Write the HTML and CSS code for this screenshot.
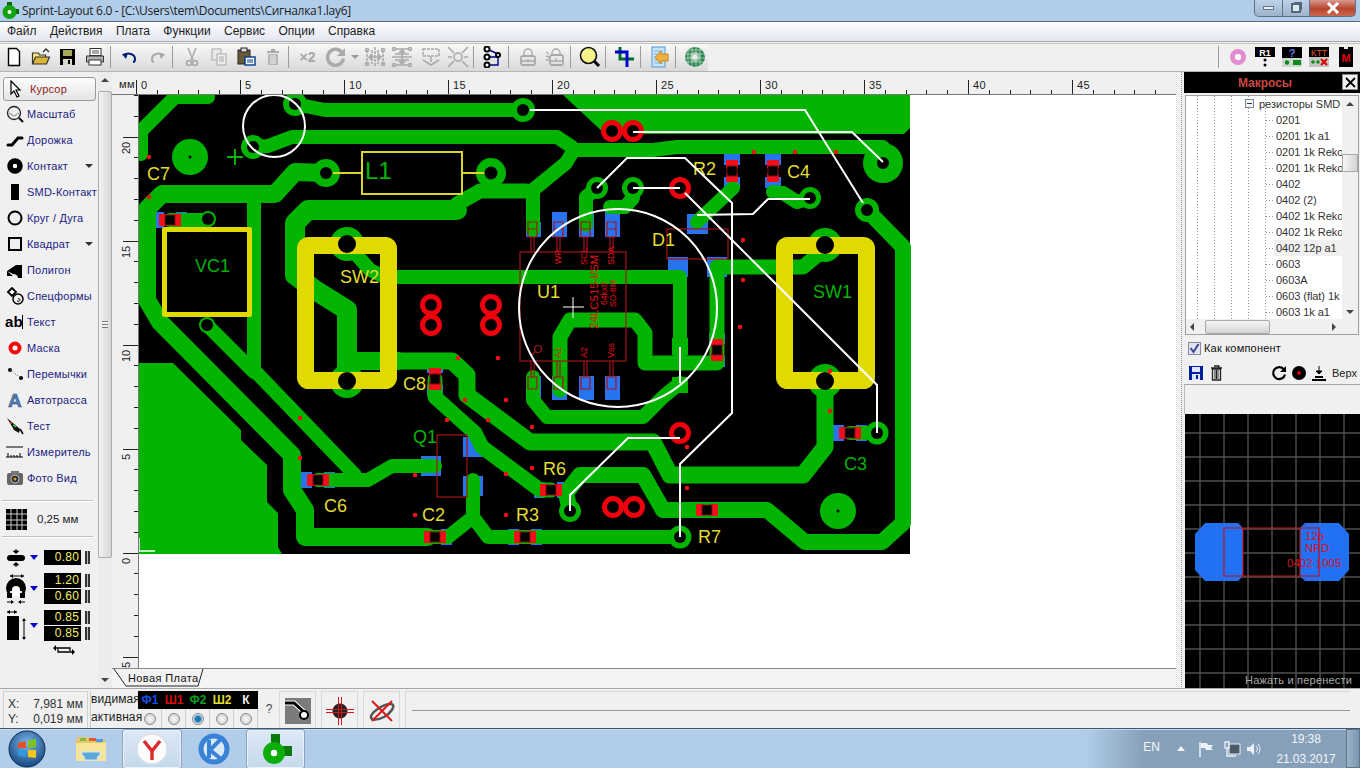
FILE: index.html
```html
<!DOCTYPE html>
<html lang="ru">
<head>
<meta charset="utf-8">
<title>Sprint-Layout 6.0</title>
<link rel="stylesheet" href="styles.css">
</head>
<body>
<div class="title">
  <svg class="ti" width="20" height="20" viewBox="0 0 20 20"><rect x="6" y="1" width="5" height="6" fill="#0a6b0a"/><rect x="13" y="8" width="5" height="5" fill="#0a6b0a"/><circle cx="8.5" cy="11" r="7" fill="#12a312"/><circle cx="8.5" cy="11" r="2" fill="#fff"/></svg>
  <span class="title-text">Sprint-Layout 6.0 - [C:\Users\tem\Documents\Сигналка1.lay6]</span>
  <div class="winctl">
    <div class="wb wb-min"><span class="w-min"></span></div>
    <div class="wb wb-max"><span class="w-max"></span></div>
    <div class="wb wb-close"><svg width="14" height="12" viewBox="0 0 14 12"><path d="M2 1l10 10M12 1L2 11" stroke="#fff" stroke-width="3"/></svg></div>
  </div>
</div>
<div class="menu"><span>Файл</span><span>Действия</span><span>Плата</span><span>Функции</span><span>Сервис</span><span>Опции</span><span>Справка</span></div>
<div class="toolbar">
  <div class="tb-left">
    <div class="tb"><svg width="20" height="20" viewBox="0 0 20 20"><path d="M4.5 1.5h8l3 3v14h-11z" fill="#fff" stroke="#000" stroke-width="1.4"/></svg></div>
    <div class="tb"><svg width="20" height="20" viewBox="0 0 20 20"><path d="M1.5 17V6h6l1 2h6v2" fill="#ffe680" stroke="#333" stroke-width="1.2"/><path d="M1.5 17l3-7h14l-3 7z" fill="#d9b53a" stroke="#333" stroke-width="1.2"/><path d="M12 5l3-3 3 3" fill="none" stroke="#333" stroke-width="1.4"/></svg></div>
    <div class="tb"><svg width="20" height="20" viewBox="0 0 20 20"><rect x="2" y="2" width="15" height="16" fill="#000"/><rect x="5" y="3" width="9" height="6" fill="#a8a85a"/><rect x="5" y="12" width="9" height="6" fill="#d8d8c8"/><rect x="10" y="13" width="2" height="4"/></svg></div>
    <div class="tb"><svg width="20" height="20" viewBox="0 0 20 20"><rect x="5" y="1.5" width="11" height="7" fill="#fff" stroke="#333"/><path d="M1.5 9h17v6h-17z" fill="#b5b5b5" stroke="#333"/><rect x="4" y="13" width="12" height="5" fill="#fff" stroke="#333"/><path d="M7 4h7M7 6h7" stroke="#555"/></svg></div>
    <i class="sep"></i>
    <div class="tb"><svg width="20" height="20" viewBox="0 0 20 20"><path d="M3 8h1c4-3 11-1 11 4 0 2-1 3-2 3" fill="none" stroke="#00207a" stroke-width="2"/><path d="M2 7l6-1-2 6z" fill="#00207a"/></svg></div>
    <div class="tb"><svg width="20" height="20" viewBox="0 0 20 20"><path d="M17 8h-1C12 5 5 7 5 12c0 2 1 3 2 3" fill="none" stroke="#a9a9a9" stroke-width="2"/><path d="M18 7l-6-1 2 6z" fill="#a9a9a9"/></svg></div>
    <i class="sep"></i>
    <div class="tb"><svg width="20" height="20" viewBox="0 0 20 20"><path d="M6 1l5 12M14 1L9 13" stroke="#aaa" stroke-width="1.5"/><circle cx="7" cy="16" r="2.5" fill="none" stroke="#aaa" stroke-width="1.6"/><circle cx="13" cy="16" r="2.5" fill="none" stroke="#aaa" stroke-width="1.6"/></svg></div>
    <div class="tb"><svg width="20" height="20" viewBox="0 0 20 20"><rect x="3" y="2" width="9" height="11" fill="#e8e8e8" stroke="#aaa"/><rect x="8" y="7" width="9" height="11" fill="#eee" stroke="#aaa"/><path d="M10 10h5M10 12h5M10 14h5" stroke="#aaa"/></svg></div>
    <div class="tb"><svg width="20" height="20" viewBox="0 0 20 20"><rect x="2" y="3" width="12" height="14" fill="#6b5a3a" stroke="#222"/><rect x="5" y="1" width="6" height="4" fill="#ddd" stroke="#222"/><rect x="9" y="10" width="10" height="8" fill="#fff" stroke="#003a8c" stroke-width="1.4"/><path d="M11 13h6M11 15h6" stroke="#003a8c"/></svg></div>
    <div class="tb"><svg width="20" height="20" viewBox="0 0 20 20"><rect x="4" y="4" width="12" height="2" fill="#aaa"/><rect x="8" y="2" width="4" height="2" fill="#aaa"/><rect x="5" y="7" width="10" height="11" fill="#b5b5b5"/><path d="M8 8v9M10 8v9M12 8v9" stroke="#eee"/></svg></div>
    <i class="sep"></i>
    <div class="tb tb-x2">×2</div>
    <div class="tb tb-rot"><svg width="22" height="22" viewBox="0 0 22 22"><path d="M17 6.5a8 8 0 1 0 1.5 6" fill="none" stroke="#aaa" stroke-width="3.4"/><path d="M20 2v8h-8z" fill="#aaa"/></svg></div>
    <div class="tb-drop"></div>
    <div class="tb"><svg width="22" height="22" viewBox="0 0 22 22" fill="none" stroke="#aaa" stroke-width="1.6"><path d="M11 1v20M3 4v14M8 4v14M14 4v14M19 4v14" stroke-dasharray="3 1"/><path d="M5 11h12M5 11l2-2v4zM17 11l-2-2v4z"/><circle cx="3" cy="4" r="1.500"/><circle cx="19" cy="4" r="1.500"/><circle cx="3" cy="18" r="1.500"/><circle cx="19" cy="18" r="1.500"/></svg></div>
    <div class="tb"><svg width="22" height="22" viewBox="0 0 22 22" fill="none" stroke="#aaa" stroke-width="1.6"><path d="M1 11h20M4 3h14M4 8h14M4 14h14M4 19h14"/><path d="M11 4v14M11 4l-2 2h4zM11 18l-2-2h4z"/><circle cx="3" cy="3" r="1.500"/><circle cx="19" cy="3" r="1.500"/><circle cx="3" cy="19" r="1.500"/><circle cx="19" cy="19" r="1.500"/></svg></div>
    <div class="tb tb-gap"><svg width="22" height="22" viewBox="0 0 22 22" fill="none" stroke="#aaa" stroke-width="1.5"><rect x="3" y="3" width="16" height="7" stroke-dasharray="3 1"/><path d="M3 14l8 5 8-5M11 10v6"/></svg></div>
    <div class="tb"><svg width="22" height="22" viewBox="0 0 22 22" fill="none" stroke="#aaa" stroke-width="1.6"><circle cx="11" cy="11" r="4"/><path d="M1 1l6 6M21 1l-6 6M1 21l6-6M21 21l-6-6M1 11h4M17 11h4"/></svg></div>
    <i class="sep"></i>
    <div class="tb"><svg width="20" height="22" viewBox="0 0 20 22"><path d="M4 3l11 5M4 11h11M4 19h11v-8" fill="none" stroke="#00008c" stroke-width="1.4"/><circle cx="4" cy="3" r="2.5" fill="#fff" stroke="#000" stroke-width="2"/><circle cx="4" cy="11" r="2.5" fill="#fff" stroke="#000" stroke-width="2"/><circle cx="4" cy="19" r="2.5" fill="#fff" stroke="#000" stroke-width="2"/><circle cx="15" cy="9" r="2" fill="#fff" stroke="#000" stroke-width="2"/></svg></div>
    <i class="sep"></i>
    <div class="tb"><svg width="20" height="20" viewBox="0 0 20 20" fill="none" stroke="#aaa" stroke-width="1.4"><path d="M6 9V6a4 4 0 0 1 8 0v3"/><rect x="3" y="9" width="14" height="9" rx="2" stroke-width="1.8"/><path d="M10 12v3M4 14h12"/></svg></div>
    <div class="tb"><svg width="20" height="20" viewBox="0 0 20 20" fill="none" stroke="#aaa" stroke-width="1.4"><path d="M7 8V6a4 4 0 0 1 8 0v2"/><rect x="5" y="8" width="13" height="10" rx="2" stroke-width="1.8"/><path d="M11 11v3M6 14h11M1 5l3 2M1 9l3 1M1 13l3 0"/></svg></div>
    <i class="sep"></i>
    <div class="tb"><svg width="22" height="22" viewBox="0 0 22 22"><path d="M15 15l5 5" stroke="#000" stroke-width="3"/><circle cx="9.5" cy="9.5" r="8" fill="#f6f28a" stroke="#111" stroke-width="1.6"/></svg></div>
    <i class="sep"></i>
    <div class="tb"><svg width="22" height="22" viewBox="0 0 22 22"><path d="M6 1v12h14" fill="none" stroke="#006e2a" stroke-width="3"/><path d="M1 6h12v15" fill="none" stroke="#0000d0" stroke-width="3"/></svg></div>
    <i class="sep"></i>
    <div class="tb"><svg width="20" height="22" viewBox="0 0 20 22"><rect x="2" y="1" width="13" height="20" fill="#c8e4fa" stroke="#4f9ad8"/><path d="M4 5h9M4 8h9M4 11h9M4 14h9M4 17h9" stroke="#78b3e2"/><path d="M18 8v7h-7v3l-6-6.500 6-6.500v3z" fill="#ecb13e" stroke="#c4871b"/></svg></div>
    <i class="sep"></i>
    <div class="tb"><svg width="22" height="22" viewBox="0 0 22 22"><circle cx="11" cy="11" r="10" fill="#2f8a52"/><circle cx="11" cy="11" r="5" fill="#8dbf9f"/><circle cx="11" cy="11" r="2.500" fill="#eee"/><path d="M0 4h22M0 8h22M0 12h22M0 16h22M4 0v22M8 0v22M12 0v22M16 0v22" stroke="#e8e8e8" stroke-width=".6"/></svg></div>
  </div>
  <div class="tb-right">
    <i class="sep"></i>
    <div class="tb"><svg width="20" height="20" viewBox="0 0 20 20"><circle cx="10" cy="10" r="5.500" fill="none" stroke="#e48ccf" stroke-width="5"/><circle cx="10" cy="10" r="3" fill="#fff"/></svg></div>
    <div class="tb"><svg width="20" height="20" viewBox="0 0 20 20"><rect width="20" height="10"/><text x="10" y="8.500" class="ic-txt">R1</text><circle cx="10" cy="13" r="1.500"/><circle cx="10" cy="18" r="1.500"/></svg></div>
    <div class="tb"><svg width="20" height="20" viewBox="0 0 20 20"><rect width="20" height="20" fill="#000"/><rect y="11" width="20" height="9" fill="#cfd8cf"/><text x="10" y="9.500" class="ic-q">?</text><circle cx="5" cy="15.500" r="2.200" fill="#0b8a1e"/><rect x="11" y="13" width="8" height="5" fill="#0b8a1e"/></svg></div>
    <div class="tb"><svg width="20" height="20" viewBox="0 0 20 20"><rect width="20" height="10" fill="#000"/><rect y="10" width="20" height="10" fill="#c5c5c5"/><text x="10" y="9" class="ic-ktt">KTT</text><circle cx="4" cy="15" r="1.800" fill="#0a8f1a"/><circle cx="9" cy="15" r="1.800" fill="#0a8f1a"/><path d="M12 12l6 6M18 12l-6 6" stroke="#d80000" stroke-width="2"/></svg></div>
    <div class="tb"><svg width="14" height="20" viewBox="0 0 14 20"><rect width="14" height="20"/><rect x="5" y="0" width="4" height="2" fill="#eee"/><text x="7" y="15" class="ic-m">M</text></svg></div>
  </div>
</div>
<div class="main">
  <div class="left">
    <div class="tool tool-on"><svg width="18" height="18" viewBox="0 0 18 18"><path d="M4 1v13l3-3 3 6 2-1-3-6h4z" fill="#fff" stroke="#000" stroke-width="1.200"/></svg><span class="sel">Курсор</span></div>
    <div class="tool"><svg width="18" height="18" viewBox="0 0 18 18"><circle cx="8" cy="8" r="6.500" fill="#eee" stroke="#222" stroke-width="1.300"/><path d="M3 8l5 3 5-3" fill="none" stroke="#888"/><path d="M13 13l4 4" stroke="#000" stroke-width="2"/></svg><span>Масштаб</span></div>
    <div class="tool"><svg width="18" height="18" viewBox="0 0 18 18"><path d="M2 14h4l6-7h4" fill="none" stroke="#000" stroke-width="3" stroke-linecap="round"/></svg><span>Дорожка</span></div>
    <div class="tool"><svg width="18" height="18" viewBox="0 0 18 18"><circle cx="9" cy="9" r="5" fill="#fff" stroke="#000" stroke-width="5.500"/></svg><span>Контакт</span><b class="drop"></b></div>
    <div class="tool"><svg width="18" height="18" viewBox="0 0 18 18"><rect x="5" y="1" width="8" height="16"/></svg><span>SMD-Контакт</span></div>
    <div class="tool"><svg width="18" height="18" viewBox="0 0 18 18"><circle cx="9" cy="9" r="6.500" fill="none" stroke="#000" stroke-width="2"/></svg><span>Круг / Дуга</span></div>
    <div class="tool"><svg width="18" height="18" viewBox="0 0 18 18"><rect x="3" y="3" width="12" height="12" fill="none" stroke="#000" stroke-width="2"/></svg><span>Квадрат</span><b class="drop"></b></div>
    <div class="tool"><svg width="18" height="18" viewBox="0 0 18 18"><path d="M1 10l9-6h6v13h-4c0-3-3-4-5-4z M1 10v5h6z"/></svg><span>Полигон</span></div>
    <div class="tool"><svg width="18" height="18" viewBox="0 0 18 18"><path d="M2 5l4-4 4 4-4 4z" fill="#fff" stroke="#000" stroke-width="1.800"/><circle cx="12" cy="12" r="5" fill="none" stroke="#000" stroke-width="1.500"/><path d="M12 12c1-1 2 0 2 1s-2 2-3 1" fill="none" stroke="#000"/></svg><span>Спецформы</span></div>
    <div class="tool"><svg class="ov" width="18" height="18" viewBox="0 0 18 18"><text x="-1" y="14" class="ic-ab">ab</text><path d="M16.500 2v14" stroke="#000"/></svg><span class="t-close">Текст</span></div>
    <div class="tool"><svg width="18" height="18" viewBox="0 0 18 18"><circle cx="9" cy="9" r="4.500" fill="#fff" stroke="#f00c0c" stroke-width="4"/></svg><span>Маска</span></div>
    <div class="tool"><svg width="18" height="18" viewBox="0 0 18 18"><circle cx="4" cy="5" r="2"/><circle cx="15" cy="13" r="2"/><path d="M4 5l11 8" stroke="#555" stroke-dasharray="1 2"/></svg><span>Перемычки</span></div>
    <div class="tool"><svg class="ov" width="18" height="18" viewBox="0 0 18 18"><text x="9" y="16" class="ic-a">A</text></svg><span>Автотрасса</span></div>
    <div class="tool"><svg width="18" height="18" viewBox="0 0 18 18"><path d="M1 1l13 11-1 4-5-3z" fill="#111"/><path d="M14 12l3 5" stroke="#000" stroke-width="1.500"/><circle cx="5" cy="6" r="1" fill="#e33"/><path d="M7 8l3 2" stroke="#4d4" stroke-width="1.500"/></svg><span>Тест</span></div>
    <div class="tool"><svg width="18" height="18" viewBox="0 0 18 18"><path d="M0 4h17M0 14h17" stroke="#000" stroke-width="1.200"/><path d="M2 14v-4M5 14v-2M8 14v-2M11 14v-2M14 14v-4" stroke="#000"/></svg><span>Измеритель</span></div>
    <div class="tool"><svg width="18" height="18" viewBox="0 0 18 18"><rect x="1" y="4" width="16" height="12" rx="2" fill="#666"/><rect x="5" y="2" width="8" height="3" fill="#777"/><circle cx="9" cy="10" r="4" fill="#2c2c2c" stroke="#bbb"/><circle cx="9" cy="10" r="1.500" fill="#d89b30"/></svg><span>Фото Вид</span></div>
    <div class="hr hr-a"></div>
    <div class="gridrow">
      <svg width="21" height="21" viewBox="0 0 21 21"><rect width="21" height="21"/><path d="M5 0v21M11 0v21M16 0v21M0 5h21M0 11h21M0 16h21" stroke="#ccc"/></svg>
      <span>0,25 мм</span>
    </div>
    <div class="hr"></div>
    <div class="setrow setrow-1">
      <svg class="set-ic" width="22" height="18" viewBox="0 0 22 18"><rect x="1" y="6" width="18" height="6" rx="3"/><path d="M10 0v4M10 18v-4M7.500 2h5l-2.500 2.500zM7.500 16h5l-2.500-2.500z" stroke="#000"/></svg>
      <b class="bdrop"></b>
      <div class="vals"><div class="valr"><span class="val">0.80</span><i class="grip"></i></div></div>
    </div>
    <div class="setrow setrow-2">
      <svg class="set-ic" width="22" height="32" viewBox="0 0 22 32"><path d="M4 3h14" stroke="#000"/><path d="M4 3l3-2v4zM18 3l-3-2v4z"/><circle cx="10" cy="15" r="10"/><rect x="4" y="18" width="12" height="7" fill="#f0f0f0"/><path d="M6 23v-6a4 4 0 0 1 8 0v6z" fill="#fff"/><rect x="8" y="14" width="4" height="9" fill="#fff"/><rect x="1" y="20" width="5" height="5"/><rect x="14" y="20" width="5" height="5"/><path d="M1 29h6M13 29h6" stroke="#000"/><path d="M8 29l-3-2v4zM12 29l3-2v4z"/></svg>
      <b class="bdrop"></b>
      <div class="vals"><div class="valr"><span class="val">1.20</span><i class="grip"></i></div><div class="valr"><span class="val">0.60</span><i class="grip"></i></div></div>
    </div>
    <div class="setrow setrow-3">
      <svg class="set-ic" width="22" height="32" viewBox="0 0 22 32"><rect x="1" y="7" width="12" height="24"/><path d="M1 3h10M18 10v20" stroke="#000"/><path d="M1 3l3-2v4zM11 3l-3-2v4zM18 9l-2 3h4zM18 31l-2-3h4z"/></svg>
      <b class="bdrop"></b>
      <div class="vals"><div class="valr"><span class="val">0.85</span><i class="grip"></i></div><div class="valr"><span class="val">0.85</span><i class="grip"></i></div></div>
    </div>
    <svg class="swap" width="22" height="10" viewBox="0 0 22 10"><path d="M3 3h14v3M19 7H5V4" fill="none" stroke="#000" stroke-width="1.300"/><path d="M3 0l-3 3 3 3zM19 4l3 3-3 3z"/></svg>
  </div>
  <div class="scroll">
    <i class="arr arr-up"></i>
    <div class="thumb"><i class="thumb-grip"></i></div>
    <i class="arr arr-down"></i>
  </div>
  <div class="center">
    <div class="rtop">
      <div class="mm">мм</div>
      <div class="ticks"><span>0</span><span>5</span><span>10</span><span>15</span><span>20</span><span>25</span><span>30</span><span>35</span><span>40</span><span>45</span></div>
    </div>
    <div class="midrow">
      <div class="rleft"><span><em>20</em></span><span><em>15</em></span><span><em>10</em></span><span><em>5</em></span><span><em>0</em></span><span><em>5</em></span></div>
      <svg class="pcb" width="1037" height="573" viewBox="139 95 1037 573">
        <defs>
          <g id="smdb"><rect x="-17" y="-8" width="11" height="16" class="blue"/><rect x="6" y="-8" width="11" height="16" class="blue"/></g>
          <g id="smdr"><rect x="-11" y="-6" width="8" height="12" class="red"/><rect x="3" y="-6" width="8" height="12" class="red"/><rect x="-5" y="-5" width="10" height="10" class="hole"/><rect x="-5" y="-5" width="10" height="10" class="outl"/></g>
        </defs>
        <rect x="139" y="95" width="771" height="459" class="hole"/>
        <polygon class="cu" points="563,95 910,95 910,128 904,134 605,134"/>
        <polygon class="cu" points="139,363 173,363 241,430 241,440 267,465 267,502 278,513 278,547 282,554 139,554"/>
        <use href="#smdb" x="170" y="220"/><use href="#smdb" x="318" y="480"/><use href="#smdb" x="435" y="537"/><use href="#smdb" x="525" y="537"/><use href="#smdb" x="551" y="490"/><use href="#smdb" x="707" y="510"/><use href="#smdb" x="850" y="433"/>
        <use href="#smdb" transform="translate(435 379) rotate(90)"/><use href="#smdb" transform="translate(732 171) rotate(90)"/><use href="#smdb" transform="translate(773 171) rotate(90)"/><use href="#smdb" transform="translate(717 350) rotate(90)"/>
        <rect x="421" y="456" width="20" height="20" class="blue"/><rect x="463" y="437" width="20" height="20" class="blue"/><rect x="463" y="476" width="20" height="20" class="blue"/>
        <rect x="687" y="214" width="21" height="20" class="blue"/><rect x="668" y="257" width="20" height="20" class="blue"/><rect x="707" y="257" width="20" height="20" class="blue"/>
        <rect x="526" y="222" width="15" height="15" class="blue"/><rect x="552" y="212" width="15" height="25" class="blue"/><rect x="579" y="212" width="15" height="25" class="blue"/><rect x="605" y="212" width="15" height="25" class="blue"/>
        <rect x="526" y="376" width="15" height="24" class="blue"/><rect x="552" y="376" width="15" height="24" class="blue"/><rect x="579" y="376" width="15" height="24" class="blue"/><rect x="605" y="376" width="15" height="24" class="blue"/>
        <g class="tr w14">
          <polyline points="208,97 175,97 141,131 141,154"/>
          <polyline points="295,104 315,108 325,110 523,110"/>
          <polyline points="253,147 268,146 292,137 557,137 572,147 572,153 566,163 533,190 533,230"/>
          <polyline points="572,150 653,150 677,147 883,147 883,163"/>
          <polyline points="347,244 370,270 385,277 680,277 680,353"/>
          <polyline points="435,537 448,537 473,517 473,480"/>
          <polyline points="473,517 488,537 680,537"/>
          <polyline points="533,377 533,400 547,417 643,417 663,397 680,383"/>
          <polyline points="254,195 254,370 355,475"/>
          <polyline points="318,480 368,480 392,466 435,466"/>
          <polyline points="207,325 254,372"/>
          <polyline points="170,220 208,220"/>
          <polyline points="697,222 733,188"/>
          <polyline points="773,192 783,193 797,202 810,198"/>
          <polyline points="633,188 633,198 625,207 610,207"/>
          <polyline points="597,188 586,197 586,225"/>
          <polyline points="850,433 877,433"/>
        </g>
        <g class="tr w15">
          <polyline points="560,390 560,337 570,320 635,320 645,333 645,363 717,363 717,267 803,267 820,253 825,245"/>
          <polyline points="435,379 435,397 475,433 482,447 540,490 551,490"/>
          <polyline points="457,204 480,191 526,191"/>
        </g>
        <g class="tr w16">
          <polyline points="570,511 566,493 580,475 643,475 663,510 767,510 805,542 882,542 903,523 903,247 867,210"/>
        </g>
        <g class="tr w17">
          <polyline points="398,361 452,361 467,375 467,395 530,442 653,442 670,475 803,475 825,447 825,381"/>
        </g>
        <g class="tr w18">
          <polyline points="326,173 295,172 275,194 162,194 147,209 147,300 160,322 292,455 292,490 305,510 305,537 428,537"/>
          <polyline points="347,361 398,361"/>
        </g>
        <g class="tr w20">
          <polyline points="457,210 308,210 295,223 295,275 315,290 347,310 347,381"/>
        </g>
        <polygon class="cu" points="672,338 688,338 688,355 672,355"/><polygon class="cu" points="672,377 688,377 688,393 672,393"/>
        <circle cx="190" cy="157" r="18" class="cu"/><circle cx="838" cy="511" r="18" class="cu"/>
        <g class="cu">
          <circle cx="295" cy="104" r="12"/><circle cx="253" cy="147" r="12"/><circle cx="523" cy="110" r="12"/><circle cx="326" cy="173" r="14"/><circle cx="491" cy="173" r="15"/>
          <circle cx="208" cy="219" r="8"/><circle cx="207" cy="325" r="8"/><circle cx="347" cy="244" r="17"/><circle cx="347" cy="381" r="17"/><circle cx="825" cy="245" r="17"/><circle cx="825" cy="381" r="17"/>
          <circle cx="883" cy="163" r="20"/><circle cx="867" cy="210" r="12"/><circle cx="597" cy="188" r="11"/><circle cx="633" cy="188" r="11"/><circle cx="810" cy="198" r="11"/><circle cx="877" cy="433" r="11.500"/><circle cx="570" cy="511" r="11"/><circle cx="680" cy="537" r="11.500"/>
        </g>
        <path d="M235 149v16M227 157h16" class="plus"/>
        <rect x="305.500" y="245.500" width="83" height="135" rx="3" class="frame"/>
        <rect x="784.500" y="245.500" width="82" height="135" rx="3" class="frame"/>
        <rect x="164.500" y="229.500" width="85" height="85" class="frame2"/>
        <path d="M333 173h29M462 173h24M362 152h100v42H362z" class="ythin"/>
        <g class="hole">
          <circle cx="295" cy="104" r="6"/><circle cx="253" cy="147" r="6"/><circle cx="523" cy="110" r="6"/><circle cx="326" cy="173" r="6"/><circle cx="491" cy="173" r="6.500"/>
          <circle cx="208" cy="219" r="6"/><circle cx="207" cy="325" r="6"/><circle cx="347" cy="244" r="9"/><circle cx="347" cy="381" r="9"/><circle cx="825" cy="245" r="9"/><circle cx="825" cy="381" r="9"/>
          <circle cx="883" cy="163" r="6"/><circle cx="867" cy="210" r="6"/><circle cx="597" cy="188" r="6"/><circle cx="633" cy="188" r="6"/><circle cx="810" cy="198" r="6"/><circle cx="877" cy="433" r="6"/><circle cx="570" cy="511" r="6"/><circle cx="680" cy="537" r="6"/>
          <circle cx="190" cy="157" r="1.500"/><circle cx="838" cy="511" r="1.500"/>
        </g>
        <use href="#smdr" x="170" y="220"/><use href="#smdr" x="318" y="480"/><use href="#smdr" x="435" y="537"/><use href="#smdr" x="525" y="537"/><use href="#smdr" x="551" y="490"/><use href="#smdr" x="707" y="510"/><use href="#smdr" x="850" y="433"/>
        <use href="#smdr" transform="translate(435 379) rotate(90)"/><use href="#smdr" transform="translate(732 171) rotate(90)"/><use href="#smdr" transform="translate(773 171) rotate(90)"/><use href="#smdr" transform="translate(717 350) rotate(90)"/>
        <g class="via">
          <circle cx="612" cy="131" r="8.500"/><circle cx="633" cy="131" r="8.500"/><circle cx="431" cy="305" r="8.500"/><circle cx="431" cy="325" r="8.500"/><circle cx="491" cy="305" r="8.500"/><circle cx="491" cy="325" r="8.500"/>
          <circle cx="680" cy="188" r="8.500"/><circle cx="680" cy="433" r="8.500"/><circle cx="613" cy="507" r="8.500"/><circle cx="634" cy="507" r="8.500"/>
        </g>
        <g class="red">
          <circle cx="149" cy="157" r="2.300"/><circle cx="149" cy="197" r="2.300"/><circle cx="300" cy="418" r="2.300"/><circle cx="300" cy="458" r="2.300"/><circle cx="458" cy="358" r="2.300"/><circle cx="498" cy="358" r="2.300"/><circle cx="465" cy="400" r="2.300"/><circle cx="506" cy="400" r="2.300"/><circle cx="447" cy="420" r="2.300"/><circle cx="488" cy="420" r="2.300"/><circle cx="532" cy="427" r="2.300"/><circle cx="532" cy="468" r="2.300"/><circle cx="506" cy="474" r="2.300"/><circle cx="415" cy="475" r="2.300"/><circle cx="415" cy="515" r="2.300"/><circle cx="506" cy="515" r="2.300"/><circle cx="687" cy="447" r="2.300"/><circle cx="687" cy="488" r="2.300"/><circle cx="754" cy="152" r="2.300"/><circle cx="795" cy="152" r="2.300"/><circle cx="836" cy="152" r="2.300"/><circle cx="743" cy="240" r="2.300"/><circle cx="743" cy="280" r="2.300"/><circle cx="740" cy="327" r="2.300"/><circle cx="830" cy="371" r="2.300"/><circle cx="830" cy="411" r="2.300"/>
        </g>
        <g class="dkr">
          <rect x="520" y="252" width="106" height="109"/>
          <rect x="437" y="435" width="30" height="62"/>
          <rect x="667" y="229" width="61" height="30"/>
          <path d="M528 222h9v15h-9zM528 229h9M531 237v15M534 237v15M554 222h9v15h-9zM554 229h9M557 237v15M560 237v15M581 222h9v15h-9zM581 229h9M584 237v15M587 237v15M607 222h9v15h-9zM607 229h9M610 237v15M613 237v15"/>
          <path d="M528 377h9v12h-9zM531 361v16M534 361v16M554 377h9v12h-9zM557 361v16M560 361v16M581 377h9v12h-9zM584 361v16M587 361v16M607 377h9v12h-9zM610 361v16M613 361v16"/>
          <circle cx="538" cy="349" r="3.500"/><path d="M531 356l5-5"/>
        </g>
        <g class="lbl-r">
          <text transform="translate(561 264) rotate(-90)">WP</text>
          <text transform="translate(587 265) rotate(-90)">SCL</text>
          <text transform="translate(614 265) rotate(-90)">SDA</text>
          <text transform="translate(561 358) rotate(-90)">A1</text>
          <text transform="translate(587 358) rotate(-90)">A2</text>
          <text transform="translate(614 358) rotate(-90)">Vss</text>
          <text transform="translate(598 329) rotate(-90)" class="lbl-b">24LC515-I/SM</text>
          <text transform="translate(607 305) rotate(-90)" class="lbl-s">64kx8</text>
          <text transform="translate(616 307) rotate(-90)" class="lbl-s">SO-8M</text>
        </g>
        <g class="lbl-y">
          <text x="147" y="180">C7</text><text x="340" y="283">SW2</text><text x="324" y="512">C6</text><text x="403" y="390">C8</text><text x="422" y="521">C2</text><text x="516" y="521">R3</text><text x="543" y="475">R6</text><text x="698" y="543">R7</text><text x="693" y="175">R2</text><text x="787" y="178">C4</text><text x="652" y="246">D1</text><text x="537" y="298">U1</text>
        </g>
        <g class="lbl-g">
          <text x="195" y="272">VC1</text><text x="813" y="298">SW1</text><text x="844" y="470">C3</text><text x="413" y="443">Q1</text>
          <text x="365" y="179" class="lbl-big">L1</text>
        </g>
        <g class="wire">
          <polyline points="530,110 805,110 863,203"/>
          <polyline points="633,132 852,132 883,162"/>
          <polyline points="597,188 627,158 685,158 732,203 732,413 680,464 680,537"/>
          <polyline points="633,188 680,188"/>
          <polyline points="685,193 877,385 877,433"/>
          <polyline points="697,215 753,214 768,199 810,199"/>
          <polyline points="570,511 570,495 628,438 680,438"/>
          <polyline points="680,347 680,383"/>
          <circle cx="618" cy="308" r="99"/>
          <circle cx="274" cy="126" r="31"/>
          <path d="M563 307h21M573 297v21" class="cross"/>
          <path d="M139 538v13h16" class="orig"/>
        </g>
      </svg>
    </div>
    <div class="tabbar">
      <svg class="tab" width="94" height="19" viewBox="0 0 94 19"><path d="M1 0l12 17h72l5-17z" class="tab-bg"/><path d="M1 0l12 17h72l5-17" class="tab-ln"/><text x="15" y="13" class="tab-t">Новая Плата</text></svg>
    </div>
  </div>
  <div class="splitter"></div>
  <div class="right">
    <div class="mhead"><span class="mtitle">Макросы</span><span class="mclose"><svg width="11" height="11" viewBox="0 0 11 11"><path d="M1 1l9 9M10 1l-9 9" stroke="#000" stroke-width="1.800"/></svg></span></div>
    <div class="treebox">
      <div class="treemain">
        <div class="tree">
          <div class="troot"><i class="minus"></i>резисторы SMD</div>
          <div class="tn">0201</div><div class="tn">0201 1k a1</div><div class="tn">0201 1k Reko</div><div class="tn">0201 1k Reko</div><div class="tn">0402</div><div class="tn">0402 (2)</div><div class="tn">0402 1k Reko</div><div class="tn">0402 1k Reko</div><div class="tn tn-sel">0402 12p a1</div><div class="tn">0603</div><div class="tn">0603A</div><div class="tn">0603 (flat) 1k</div><div class="tn">0603 1k a1</div>
        </div>
        <div class="hscroll"><i class="ha ha-l"></i><i class="hthumb"></i><i class="ha ha-r"></i></div>
      </div>
      <div class="vscroll"><i class="arr arr-up"></i><i class="vthumb"></i><i class="arr arr-down"></i></div>
    </div>
    <label class="chk"><span class="box"><svg width="11" height="11" viewBox="0 0 11 11"><path d="M1.500 5l3 4 5-8" fill="none" stroke="#3b4a8e" stroke-width="2"/></svg></span>Как компонент</label>
    <div class="macrobar">
      <svg width="14" height="14" viewBox="0 0 14 14"><rect width="14" height="14" fill="#001ea0"/><rect x="3" y="1" width="8" height="5" fill="#dfe4ff"/><rect x="3" y="8" width="8" height="6" fill="#dfe4ff"/><rect x="7" y="9" width="2" height="4" fill="#001ea0"/></svg>
      <svg class="mb-tr" width="13" height="16" viewBox="0 0 13 16"><path d="M1 3h11M4 1h5v2M2.500 4h8v11h-8z" fill="none" stroke="#222" stroke-width="1.300"/><path d="M5 5v9M6.500 5v9M8 5v9" stroke="#222"/></svg>
      <svg class="mb-ro" width="16" height="16" viewBox="0 0 16 16"><path d="M13 4.500a6 6 0 1 0 1 5" fill="none" stroke="#000" stroke-width="2.200"/><path d="M15 1v6h-6z"/></svg>
      <svg width="14" height="14" viewBox="0 0 14 14"><circle cx="7" cy="7" r="7"/><circle cx="7" cy="7" r="2" fill="#e00000"/></svg>
      <svg width="16" height="16" viewBox="0 0 16 16"><path d="M8 1v7M5 6l3 3 3-3z" stroke="#000"/><path d="M4 11h8v2H4zM1 14h14v2H1z"/></svg>
      <span class="verx">Верх</span>
    </div>
    <div class="graybox"></div>
    <svg class="preview" width="175" height="274" viewBox="1185 414 175 274">
      <rect x="1185" y="414" width="175" height="274" class="hole"/>
      <path class="gr1" d="M1200 414v274M1224 414v274M1248 414v274M1272 414v274M1296 414v274M1320 414v274M1344 414v274M1185 433h176M1185 457h176M1185 481h176M1185 505h176M1185 529h176M1185 553h176M1185 577h176M1185 601h176M1185 625h176M1185 649h176M1185 673h176"/>
      <polygon class="pblue" points="1205,523 1238,523 1243,528 1243,576 1238,581 1205,581 1195,570 1195,534"/>
      <polygon class="pblue" points="1305,523 1339,523 1349,534 1349,570 1339,581 1305,581 1300,576 1300,528"/>
      <path class="pout" d="M1224 528h95v48h-95zM1243 528v48M1300 528v48"/>
      <text x="1305" y="540" class="ptxt">12p</text><text x="1305" y="552" class="ptxt">NPD</text><text x="1287" y="567" class="ptxt">0402 1005</text>
      <text x="1245" y="684" class="phint">Нажать и перенести</text>
    </svg>
  </div>
</div>
<div class="status">
  <div class="st-xy"><div class="xy"><span>X:</span><span>7,981 мм</span></div><div class="xy"><span>Y:</span><span>0,019 мм</span></div></div>
  <div class="st-layers">
    <div class="lrow"><span class="lname">видимая</span><div class="lvis"><b class="l-f1">Ф1</b><b class="l-s1">Ш1</b><b class="l-f2">Ф2</b><b class="l-s2">Ш2</b><b class="l-k">К</b></div></div>
    <div class="lrow"><span class="lname">активная</span><div class="lrad"><i><u></u></i><i><u></u></i><i><u class="on"></u></i><i><u></u></i><i><u></u></i></div></div>
  </div>
  <span class="q">?</span>
  <div class="stb"><svg width="26" height="26" viewBox="0 0 26 26"><rect width="26" height="26" fill="#7b7b7b"/><path d="M0 5h9l10 9" fill="none" stroke="#fff" stroke-width="5"/><path d="M0 5h9l10 9" fill="none" stroke="#000" stroke-width="3"/><circle cx="19" cy="17" r="4" fill="#fff" stroke="#000" stroke-width="2"/></svg></div>
  <div class="stb"><svg width="28" height="28" viewBox="0 0 28 28"><circle cx="14" cy="14" r="7.500" fill="#222"/><path d="M0 12.500h28M0 15.500h28M12.500 0v28M15.500 0v28" stroke="#d8101a"/></svg></div>
  <div class="stb"><svg width="28" height="28" viewBox="0 0 28 28"><path d="M3 20c0-5 14-14 20-13s-1 10-7 13-13 4-13 0z" fill="none" stroke="#555" stroke-width="2.500"/><path d="M4 4l20 20M24 4L4 24" stroke="#e01818" stroke-width="2"/></svg></div>
  <div class="st-line"><i></i></div>
</div>
<div class="taskbar">
  <svg class="orb" width="38" height="38" viewBox="0 0 38 38"><defs><radialGradient id="og" cx=".5" cy=".35" r=".7"><stop offset="0" stop-color="#7ab8e8"/><stop offset="1" stop-color="#0f3f7a"/></radialGradient></defs><circle cx="19" cy="19" r="18" fill="url(#og)" stroke="#0d2c50"/><path d="M10 13l8-2v7h-8z" fill="#e8502a"/><path d="M20 11l8-2v8l-8 1z" fill="#7fc31c"/><path d="M10 20h8v7l-8-2z" fill="#2e9be0"/><path d="M20 20h8v8l-8-1z" fill="#f7c51e"/></svg>
  <div class="tk tk-exp"><svg width="32" height="28" viewBox="0 0 32 28"><path d="M1 5l2-3h10l2 2h15v7H1z" fill="#e7c765"/><path d="M1 8h30v18H1z" fill="#f6e49a"/><path d="M5 3h6v3H5z" fill="#7dbb4c"/><path d="M14 3h7v3h-7z" fill="#e45b3c"/><path d="M21 4h7v3h-7z" fill="#4f9ddf"/><path d="M7 17h18v4h-2l-1 4H10l-1-4H7z" fill="#5ca9d8" stroke="#cfe7f5"/></svg></div>
  <div class="tk tk-on tk-ya"><svg width="32" height="32" viewBox="0 0 32 32"><circle cx="16" cy="16" r="15" fill="#fbfbfb" stroke="#ddd"/><path d="M8 8l8 10 8-10M16 18v9" fill="none" stroke="#de2a2a" stroke-width="3.400"/></svg></div>
  <div class="tk tk-k"><svg width="32" height="32" viewBox="0 0 32 32"><circle cx="16" cy="16" r="13" fill="#d8e9f8" stroke="#3a82d6" stroke-width="5"/><path d="M11 7v18M22 7L12 17l11 9" fill="none" stroke="#3a82d6" stroke-width="4"/></svg></div>
  <div class="tk tk-on tk-app"><svg width="34" height="34" viewBox="0 0 34 34"><rect x="12" y="2" width="9" height="12" fill="#0c7a0c"/><rect x="24" y="14" width="9" height="10" fill="#0c7a0c"/><circle cx="15" cy="21" r="11" fill="#0cae0c"/><circle cx="15" cy="21" r="3.200" fill="#fff"/></svg></div>
  <div class="tray">
    <span class="en">EN</span>
    <i class="tr-up"></i>
    <svg class="tr-flag" width="16" height="16" viewBox="0 0 16 16"><path d="M2 1v15" stroke="#eaf2fa" stroke-width="1.500"/><path d="M3 2h6l1 2h5l-2 3 2 2H8L7 7H3z" fill="#eaf2fa"/></svg>
    <svg class="tr-pc" width="17" height="17" viewBox="0 0 17 17"><rect x="5" y="4" width="11" height="10" fill="#4a5a68" stroke="#eaf2fa"/><path d="M1 2h4v6H1zM3 8v8h9" fill="none" stroke="#eaf2fa" stroke-width="1.300"/></svg>
    <svg class="tr-sp" width="16" height="16" viewBox="0 0 16 16"><path d="M1 6h3l4-4v12l-4-4H1z" fill="#eaf2fa"/><path d="M10 5a4 4 0 0 1 0 6M12 3a7 7 0 0 1 0 10" fill="none" stroke="#eaf2fa"/></svg>
    <div class="clock"><span>19:38</span><span>21.03.2017</span></div>
    <div class="showd"></div>
  </div>
</div>
</body>
</html>
```
FILE: styles.css
```css
*{box-sizing:border-box}
html,body{margin:0;padding:0}
body{width:1360px;height:768px;overflow:hidden;display:flex;flex-direction:column;background:#f0f0f0;font-family:"Liberation Sans",Arial,sans-serif;font-size:11px;color:#222}
svg{display:block;flex:none}
.ov{overflow:visible}
.title{height:21px;background:#b1cde9;display:flex;align-items:center;padding-left:1px;position:relative}
.ti{margin-top:1px}
.title-text{font-family:"Open Sans",sans-serif;font-size:12px;color:#1d1d1d;margin-left:1px;letter-spacing:-.3px}
.winctl{margin-left:auto;margin-right:4px;align-self:flex-start;display:flex;height:17px}
.wb{height:17px;display:flex;align-items:center;justify-content:center;border:1px solid #5f7186;border-top:0;background:linear-gradient(#bdd2e8,#9fb4cb)}
.wb-min{width:29px;border-radius:0 0 0 5px}
.wb-max{width:27px;border-left:0}
.wb-close{width:46px;border-left:0;border-radius:0 0 5px 0;background:linear-gradient(#d79a8e,#b8432f 55%,#c96a4f)}
.w-min{width:11px;height:4px;background:#e8eef5;border:1px solid #62758a}
.w-max{width:10px;height:10px;border:2px solid #55697d;background:#dfe8f2;box-shadow:2px -2px 0 -1px #55697d}
.menu{height:21px;border-top:1px solid #5a6a7c;background:linear-gradient(#fff,#f4f5fa 35%,#e3e6f2);display:flex;align-items:center;padding-left:7px;font-size:12px;gap:13.4px;border-bottom:1px solid #a9a9a9;color:#1c1c1c}
.toolbar{height:30px;display:flex;align-items:stretch;background:#f0f0f0;border-bottom:1px solid #b4b4b4;margin-top:1px;border-top:1px solid #c4c4c4}
.tb-left{display:flex;align-items:center;background:linear-gradient(#f8f8f8,#d9d9d9);width:708px}
.tb-right{margin-left:auto;display:flex;align-items:center;padding-right:1px}
.tb{width:27px;height:24px;display:flex;align-items:center;justify-content:center}
.tb-x2{font-size:14px;font-weight:700;color:#a5a5a5}
.tb-rot{margin-left:1px}
.tb-gap{margin-left:2px}
.tb-drop{width:12px;height:4px;position:relative}
.tb-drop::before{content:"";display:block;width:0;height:0;margin:0 auto;border:4px solid transparent;border-top-color:#999;border-bottom:0}
.sep{display:block;width:1px;height:22px;background:#9c9c9c;margin:0 5px 0 2px;flex:none}
.ic-txt{font:700 9px "Liberation Sans",sans-serif;fill:#fff;text-anchor:middle}
.ic-q{font:700 11px "Liberation Sans",sans-serif;fill:#6677ee;text-anchor:middle}
.ic-ktt{font:8.500px "Liberation Sans",sans-serif;fill:#e45a3a;text-anchor:middle}
.ic-m{font:700 11px "Liberation Sans",sans-serif;fill:#e00000;text-anchor:middle}
.ic-ab{font:700 15px "Liberation Sans",sans-serif;fill:#000}
.ic-a{font:700 19px "Liberation Sans",sans-serif;fill:#4f7fb5;text-anchor:middle;stroke:#2b4a70;stroke-width:.5px}
.main{height:616px;display:flex}
.left{width:98px;padding-top:4px;background:#f0f0f0;display:flex;flex-direction:column}
.tool{height:26px;display:flex;align-items:center;padding-left:6px;gap:3px;color:#1c1c84;letter-spacing:.2px;flex:none;white-space:nowrap;position:relative}
.tool-on{margin:1px 2px 0 3px;height:24px;padding-left:3px;border:1px solid #9a9a9a;border-radius:3px;background:linear-gradient(#fdfdfd,#e4e4e4)}
.sel{color:#8a1c1c;margin-left:2px}
.t-close{margin-left:0}
.drop{position:absolute;right:5px;top:11px;border:4px solid transparent;border-top-color:#333;border-bottom:0;width:0;height:0}
.hr{height:2px;margin:0 5px 0 2px;background:#c0c0c0;flex:none;border-bottom:1px solid #fff}
.hr-a{margin-top:9px}
.gridrow{height:34px;display:flex;align-items:center;padding-left:6px;gap:10px;color:#222;font-size:11.500px;flex:none}
.setrow{display:flex;align-items:center;padding-left:6px;flex:none;position:relative}
.setrow-1{margin-top:12px;height:15px}
.setrow-2{margin-top:8px;height:31px}
.setrow-3{margin-top:5px;height:32px}
.set-ic{flex:none}
.bdrop{width:0;height:0;border:4px solid transparent;border-top:5px solid #0000d0;border-bottom:0;margin-left:2px;margin-right:6px;flex:none}
.vals{display:flex;flex-direction:column;gap:1px}
.valr{display:flex;align-items:center;gap:4px}
.val{display:block;width:37px;height:15px;line-height:15px;background:#000;color:#f4f06a;text-align:right;padding-right:2px;font-size:12px;letter-spacing:.2px}
.grip{display:block;width:5px;height:13px;background:repeating-linear-gradient(90deg,#333 0 2px,#bbb 2px 3px)}
.swap{margin:4px 0 0 53px}
.scroll{width:14px;background:#ececec;display:flex;flex-direction:column;align-items:center;padding-top:6px}
.arr{display:block;width:0;height:0;flex:none;border:4px solid transparent}
.arr-up{border-bottom:4px solid #444;border-top:0}
.arr-down{border-top:4px solid #444;border-bottom:0;margin-top:auto;margin-bottom:6px}
.thumb{width:14px;height:467px;margin-top:9px;background:linear-gradient(90deg,#f3f3f3,#d7d7d7);border:1px solid #aaa;border-radius:2px;display:flex;align-items:center;justify-content:center}
.thumb-grip{display:block;width:6px;height:7px;background:repeating-linear-gradient(#777 0 1px,#eee 1px 3px)}
.center{width:1064px;display:flex;flex-direction:column;min-height:0}
.rtop{height:22px;display:flex;flex:none}
.mm{width:26px;padding:6px 0 0 7px;font-size:11px;letter-spacing:.5px}
.ticks{flex:1;display:flex;background:repeating-linear-gradient(90deg,#222 0 1px,transparent 1px 20.8px) 0 100%/100% 4px no-repeat}
.ticks span{width:104px;flex:none;border-left:1px solid #222;padding:0 0 0 4px;margin-top:8px;height:14px;line-height:11px;font-size:11px;letter-spacing:.3px}
.midrow{height:574px;flex:none;display:flex;border-top:1px solid #777;overflow:hidden}
.rleft{width:27px;padding-top:42px;overflow:hidden;border-right:1px solid #777;display:flex;flex-direction:column;align-items:flex-end;background:repeating-linear-gradient(#222 0 1px,transparent 1px 20.8px) 100% .4px/4px 100% no-repeat}
.rleft span{height:104px;width:15px;flex:none;border-top:1px solid #222;display:block;padding-top:4px}
.rleft em{display:block;font-style:normal;font-size:11px;writing-mode:vertical-rl;transform:rotate(180deg);margin-left:-3px;height:14px;text-align:right}
.pcb{background:#fff}
.tabbar{height:20px;border-top:1px solid #888;background:repeating-conic-gradient(#f0f0f0 0 25%,#f7f7f7 0 50%) 0 0/2px 2px;padding-left:1px;flex:none}
.tab-bg{fill:#f2f2f2}
.tab-ln{fill:none;stroke:#222}
.tab-t{font:11px "Liberation Sans",sans-serif;fill:#111;letter-spacing:.4px}
.splitter{width:8px;background:repeating-linear-gradient(#999 0 1px,transparent 1px 2px) 5px 0/1px 100% no-repeat}
.right{width:176px;display:flex;flex-direction:column}
.mhead{height:21px;background:#000;display:flex;align-items:center;justify-content:center;position:relative;flex:none;padding-right:14px}
.mtitle{color:#c9463f;font-weight:700;font-size:12px}
.mclose{position:absolute;right:2px;top:2px;width:16px;height:16px;background:#f2f2f2;border:1px solid #888;display:flex;align-items:center;justify-content:center}
.treebox{height:240px;margin:2px 1px 0 1px;border:1px solid #a0a0a0;background:#fff;display:flex;flex:none}
.treemain{flex:1;display:flex;flex-direction:column;min-width:0}
.tree{flex:1;overflow:hidden;padding:0;background:repeating-linear-gradient(#999 0 1px,transparent 1px 3px) 11px 0/1px 100% no-repeat,repeating-linear-gradient(#999 0 1px,transparent 1px 3px) 28px 0/1px 100% no-repeat,repeating-linear-gradient(#999 0 1px,transparent 1px 3px) 45px 0/1px 100% no-repeat,repeating-linear-gradient(#999 0 1px,transparent 1px 3px) 62px 0/1px 100% no-repeat,repeating-linear-gradient(#999 0 1px,transparent 1px 3px) 79px 0/1px 100% no-repeat}
.troot{height:16px;margin-left:59px;padding-left:14px;display:flex;align-items:center;white-space:nowrap;color:#333;position:relative}
.minus{position:absolute;left:0;top:3px;width:9px;height:9px;border:1px solid #7a8a9a;background:#f4f6f8}
.minus::after{content:"";display:block;width:5px;height:1px;background:#333;margin:3px 1px}
.tn{height:16px;padding-left:90px;line-height:16px;white-space:nowrap;letter-spacing:-.05px;color:#333;position:relative;background:repeating-linear-gradient(90deg,#999 0 1px,transparent 1px 3px) 80px 8px/9px 1px no-repeat}
.tn-sel{background:repeating-linear-gradient(90deg,#999 0 1px,transparent 1px 3px) 80px 8px/9px 1px no-repeat,linear-gradient(#f0f0f0,#f0f0f0) 88px 0/70px 100% no-repeat}
.hscroll{height:15px;background:#f0f0f0;display:flex;align-items:center;flex:none;padding:0 4px}
.ha{display:block;width:0;height:0;border:4px solid transparent}
.ha-l{border-right:4px solid #444;border-left:0}
.ha-r{border-left:4px solid #444;border-right:0;margin-left:auto;margin-right:2px}
.hthumb{display:block;width:65px;height:14px;margin-left:11px;background:linear-gradient(#f5f5f5,#d4d4d4);border:1px solid #aaa;border-radius:2px}
.vscroll{width:16px;background:#f0f0f0;display:flex;flex-direction:column;align-items:center;padding-top:6px;flex:none}
.vthumb{display:block;width:16px;height:18px;margin-top:48px;background:linear-gradient(90deg,#f5f5f5,#d4d4d4);border:1px solid #aaa}
.vscroll .arr-down{margin-bottom:20px}
.chk{height:26px;display:flex;align-items:center;padding-left:4px;gap:3px;letter-spacing:.2px;font-size:11px;color:#111;flex:none}
.box{width:13px;height:13px;border:1px solid #8a8a9a;background:#dfe4f2;display:flex;align-items:center;justify-content:center}
.macrobar{height:23px;display:flex;align-items:center;padding-left:5px;gap:5px;flex:none}
.mb-tr{margin-left:2px}
.mb-ro{margin-left:43px}
.verx{font-size:11px;margin-left:0}
.graybox{height:30px;flex:none;border-top:1px solid #a5a5a5;background:#f0f0f0;border-left:1px solid #bbb}
.preview{background:#000;margin-left:1px}
.hole{fill:#000}
.cu{fill:#00b400}
.blue{fill:#2874f0}
.red{fill:#f0101a}
.outl{fill:none;stroke:#8a0f14;stroke-width:1}
.tr{fill:none;stroke:#00b400;stroke-linecap:round;stroke-linejoin:round}
.w14{stroke-width:14}
.w15{stroke-width:15}
.w16{stroke-width:16}
.w17{stroke-width:17}
.w18{stroke-width:18}
.w20{stroke-width:20}
.plus{stroke:#00b400;stroke-width:2;fill:none}
.frame{fill:none;stroke:#e1da00;stroke-width:17;stroke-linejoin:round}
.frame2{fill:none;stroke:#e1da00;stroke-width:5;stroke-linejoin:round}
.ythin{fill:none;stroke:#dcd52e;stroke-width:2}
.via{fill:#000;stroke:#f0000c;stroke-width:5}
.dkr{fill:none;stroke:#a5131a;stroke-width:1.200}
.lbl-r text{font:9px "Liberation Sans",sans-serif;fill:#e3101a}
.lbl-r .lbl-b{font-size:11.500px}
.lbl-r .lbl-s{font-size:8.500px}
.lbl-y text{font:18px "Liberation Sans",sans-serif;fill:#e3dc30}
.lbl-g text{font:18px "Liberation Sans",sans-serif;fill:#00b400}
.lbl-g .lbl-big{font-size:24px}
.wire{fill:none;stroke:#fff;stroke-width:2;stroke-linejoin:miter}
.wire .cross{stroke-width:1}
.wire .orig{stroke-width:1.500}
.gr1{stroke:#505050;stroke-width:1.400;fill:none}
.pblue{fill:#2270f4}
.pout{fill:none;stroke:#c4101c;stroke-width:1.200}
.ptxt{font:11.500px "Liberation Sans",sans-serif;fill:#d8101c}
.phint{font:11px "Liberation Sans",sans-serif;fill:#aaa;letter-spacing:.2px}
.status{height:40px;flex:none;display:flex;border-top:1px solid #a8a8a8;align-items:flex-start;padding-top:2px;background:#f0f0f0}
.st-xy{width:85px;height:38px;margin-left:3px;border:1px solid #d0d0d0;border-bottom:0;padding:5px 4px 0 4px;font-size:12px;color:#333}
.xy{display:flex;justify-content:space-between;height:15px}
.st-layers{width:169px;margin-left:2px;border-left:1px solid #ccc}
.lrow{display:flex;height:18px}
.lrow+.lrow{height:20px}
.lname{width:47px;font-size:12px;letter-spacing:.1px;color:#222;line-height:17px;white-space:nowrap}
.lvis{width:120px;background:#000;display:flex;align-items:center}
.lvis b{width:24px;text-align:center;font-size:12px}
.l-f1{color:#1450e8}
.l-s1{color:#d80a0a}
.l-f2{color:#07a020}
.l-s2{color:#e3dc30}
.l-k{color:#eee}
.lrad{display:flex;width:120px}
.lrad i{width:24px;display:flex;align-items:center;justify-content:center;border-right:1px solid #ccc}
.lrad u{display:block;width:12px;height:12px;border-radius:50%;border:1px solid #8a8a8a;background:radial-gradient(#f8f8f8,#c9c9c9)}
.lrad .on{background:radial-gradient(#1e78b0 35%,#e8eef2 70%)}
.q{width:20px;text-align:center;font-size:12px;line-height:36px;color:#444}
.stb{width:37px;height:38px;margin-right:5px;border:1px solid #d8d8d8;border-bottom:0;display:flex;align-items:center;justify-content:center}
.st-line{flex:1;height:38px;margin-right:10px;border:1px solid #d8d8d8;border-bottom:0;border-right:0;display:flex;align-items:center;padding-left:6px}
.st-line i{display:block;height:1px;width:100%;background:#999;margin-top:-1px}
.taskbar{height:40px;flex:none;display:flex;align-items:center;background:linear-gradient(90deg,#b1cde9 1085px,#86a0b9 1145px);border-top:1px solid #3d556e;box-shadow:inset 0 1px 0 #c9dcee;position:relative}
.orb{margin-left:8px}
.tk{height:40px;display:flex;align-items:center;justify-content:center;flex:none}
.tk-exp{width:60px;margin-left:15px}
.tk-on{border:1px solid #8ea3b8;border-radius:3px;background:linear-gradient(#dce9f5,#c5d9ec);box-shadow:inset 0 0 0 1px #eaf2f9}
.tk-ya{width:60px;margin-left:1px}
.tk-k{width:64px}
.tk-app{width:59px}
.tray{margin-left:auto;display:flex;align-items:center;height:39px;color:#f2f6fa}
.en{font-size:12px;margin-right:17px;margin-top:-4px}
.tr-up{display:block;width:0;height:0;border:4px solid transparent;border-bottom:5px solid #eef4fa;border-top:0;margin-right:13px}
.tr-flag{margin-right:10px}
.tr-pc{margin-right:5px}
.tr-sp{margin-right:8px}
.clock{width:62px;margin:0 9px 0 5px;display:flex;flex-direction:column;align-items:center;gap:6px;font-size:12px;letter-spacing:-.1px}
.showd{width:14px;height:39px;border:1px solid #5d7389;background:linear-gradient(90deg,#9bb2c7,#7d97b0)}
```
